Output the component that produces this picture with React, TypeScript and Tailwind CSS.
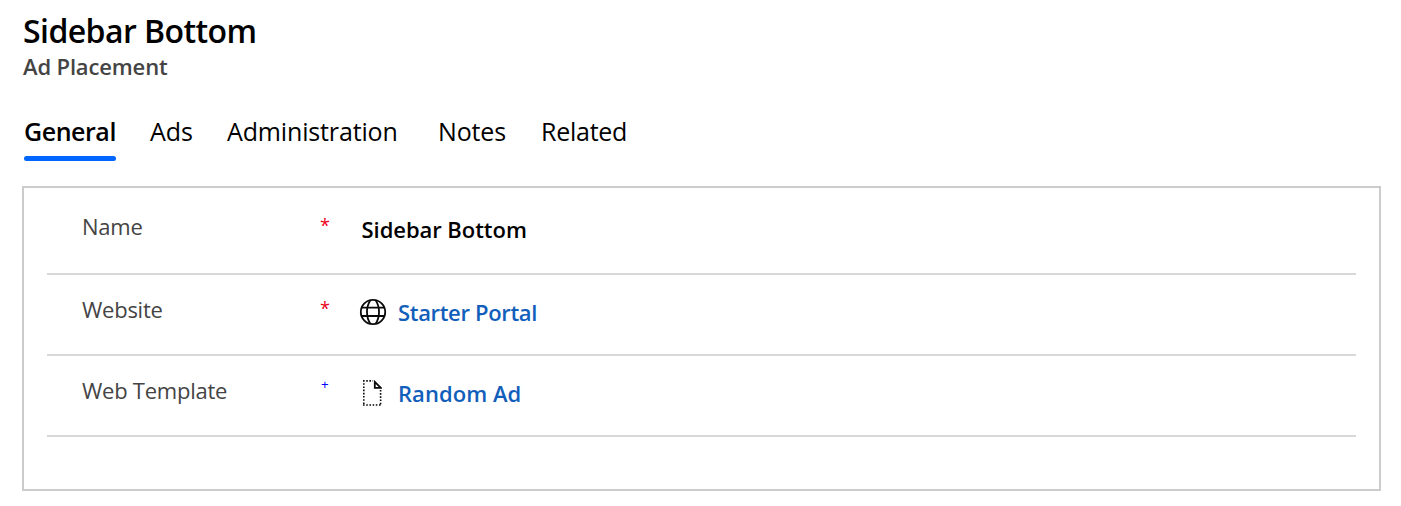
import type { ReactNode } from "react";

const tabs = [
  { label: "General", box: "w-[92px] mr-[34px] font-semibold tracking-[-0.45px]", active: true },
  { label: "Ads", box: "w-[44px] mr-[33px] tracking-[-0.1px]" },
  { label: "Administration", box: "w-[172px] mr-[39px] tracking-[-0.15px]" },
  { label: "Notes", box: "w-[70px] mr-[33px] tracking-[-0.15px]" },
  { label: "Related", box: "w-[88px] tracking-[-0.25px]" },
];

function GlobeIcon() {
  return (
    <svg className="-ml-px" width="28" height="28" viewBox="0 0 28 28" fill="none" stroke="#0a0a0a" strokeWidth="1.8">
      <circle cx="14" cy="14" r="12.2" />
      <path d="M11.5 2C6.8 9 6.8 19 11.5 26M16.5 2C21.2 9 21.2 19 16.5 26" />
      <path d="M2.6 9.6h22.8M2.6 18h22.8" />
    </svg>
  );
}

function TemplateIcon() {
  return (
    <svg className="ml-[2px]" width="20" height="28" viewBox="0 0 20 28" fill="none" stroke="#0a0a0a">
      <path d="M1 1.9h10M1 26h18.5M1.8 4.2v21M18.6 10.9v14.5" strokeWidth="1.6" strokeDasharray="1.6 1.6" />
      <path d="M12.8 2.9v5.9h6z" strokeWidth="1.8" />
    </svg>
  );
}

function Row({ label, mark, box, children }: { label: string; mark: ReactNode; box: string; children: ReactNode }) {
  return (
    <div className={`flex border-b-2 border-[#d8d8d8] pl-[35px] ${box}`}>
      <div className="w-[238px] text-[22px] leading-[30px] tracking-[-0.25px] text-[#444]">{label}</div>
      <div className="w-[40px]">{mark}</div>
      <div className="mt-[3px] flex h-[30px] items-center text-[22px] leading-[30px] font-semibold">{children}</div>
    </div>
  );
}

const required = <span className="block text-[18px] leading-[28px] text-[#f00018]">*</span>;
const recommended = <span className="ml-px block pt-[3px] font-['Liberation_Sans',sans-serif] text-[13px] leading-[14px] text-[#0000ff]">+</span>;

export default function App() {
  return (
    <main className="flex h-[506px] w-[1401px] flex-col bg-white pr-[20px] pl-[22px] font-['Open_Sans',sans-serif] text-black">
      <h1 className="mt-[9px] h-[44px] pl-px text-[32px] leading-[44px] font-semibold tracking-[-0.57px]">Sidebar Bottom</h1>
      <p className="h-[26px] pl-px text-[22px] leading-[26px] font-semibold tracking-[-0.15px] text-[#444]">Ad Placement</p>
      <nav className="mt-[34px] flex h-[48px] pl-[2px] text-[25px] leading-[36px]">
        {tabs.map((t) => (
          <div key={t.label} className={`whitespace-nowrap ${t.box}`}>
            {t.label}
            {t.active && <div className="mt-[7px] h-[5px] rounded-full bg-[#0066ff]" />}
          </div>
        ))}
      </nav>
      <section className="mt-[25px] h-[305px] border-2 border-[#ccc] px-[23px]">
        <Row label="Name" mark={required} box="h-[87px] pt-[23px]">
          <span className="pl-[1.5px] tracking-[-0.05px]">Sidebar Bottom</span>
        </Row>
        <Row label="Website" mark={required} box="h-[81px] pt-[19px]">
          <GlobeIcon />
          <span className="pl-[11px] tracking-[-0.33px] text-[#115ebb]">Starter Portal</span>
        </Row>
        <Row label="Web Template" mark={recommended} box="h-[81px] pt-[19px]">
          <TemplateIcon />
          <span className="pl-[16px] tracking-[0.05px] text-[#115ebb]">Random Ad</span>
        </Row>
      </section>
    </main>
  );
}
